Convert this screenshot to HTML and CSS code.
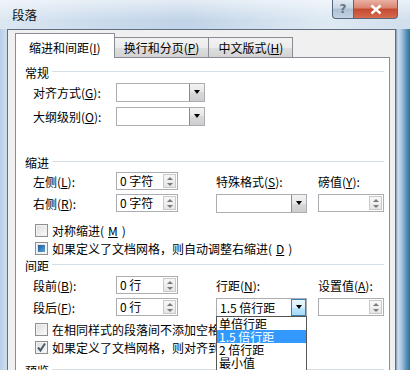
FILE: index.html
```html
<!DOCTYPE html>
<html>
<head>
  <meta charset="utf-8">
  <title>段落</title>
  <link rel="stylesheet" href="styles.css">
</head>
<body>
  <div class="window">
    <div class="titlebar">
      <span class="title">段落</span>
      <div class="caption-buttons">
        <span class="cap-btn help">?</span>
        <span class="cap-btn close">
          <svg width="14" height="11" viewBox="0 0 14 11"><path d="M2.5 1.5 L11.5 9.5 M11.5 1.5 L2.5 9.5"/></svg>
        </span>
      </div>
    </div>
    <div class="frame">
      <div class="client">
        <div class="tabs">
          <div class="tab active">缩进和间距(<u>I</u>)</div>
          <div class="tab">换行和分页(<u>P</u>)</div>
          <div class="tab">中文版式(<u>H</u>)</div>
        </div>
        <div class="panel">
          <div class="group-title">常规</div>
          <div class="form-grid general">
            <label>对齐方式(<u>G</u>):</label>
            <div class="combo wide"><span class="combo-text"></span><span class="drop-btn"></span></div>
            <label>大纲级别(<u>O</u>):</label>
            <div class="combo wide"><span class="combo-text"></span><span class="drop-btn"></span></div>
          </div>

          <div class="group-title spaced">缩进</div>
          <div class="form-grid measures">
            <label>左侧(<u>L</u>):</label>
            <div class="spin"><span class="spin-text">0 字符</span><span class="spin-btns"><span class="up"></span><span class="down"></span></span></div>
            <label>特殊格式(<u>S</u>):</label>
            <label>磅值(<u>Y</u>):</label>
            <label>右侧(<u>R</u>):</label>
            <div class="spin"><span class="spin-text">0 字符</span><span class="spin-btns"><span class="up"></span><span class="down"></span></span></div>
            <div class="combo"><span class="combo-text"></span><span class="drop-btn"></span></div>
            <div class="spin value"><span class="spin-text"></span><span class="spin-btns"><span class="up"></span><span class="down"></span></span></div>
          </div>
          <div class="check-list">
            <div class="check"><span class="box"></span>对称缩进(<u>M</u>)</div>
            <div class="check"><span class="box mixed"></span>如果定义了文档网格，则自动调整右缩进(<u>D</u>)</div>
          </div>

          <div class="group-title">间距</div>
          <div class="form-grid measures tight">
            <label>段前(<u>B</u>):</label>
            <div class="spin"><span class="spin-text">0 行</span><span class="spin-btns"><span class="up"></span><span class="down"></span></span></div>
            <label>行距(<u>N</u>):</label>
            <label>设置值(<u>A</u>):</label>
            <label>段后(<u>F</u>):</label>
            <div class="spin"><span class="spin-text">0 行</span><span class="spin-btns"><span class="up"></span><span class="down"></span></span></div>
            <div class="combo open">
              <span class="combo-text">1.5 倍行距</span><span class="drop-btn hot"></span>
              <ul class="drop-list">
                <li>单倍行距</li>
                <li class="selected">1.5 倍行距</li>
                <li>2 倍行距</li>
                <li>最小值</li>
                <li>固定值</li>
                <li>多倍行距</li>
              </ul>
            </div>
            <div class="spin value"><span class="spin-text"></span><span class="spin-btns"><span class="up"></span><span class="down"></span></span></div>
          </div>
          <div class="check-list after">
            <div class="check"><span class="box"></span>在相同样式的段落间不添加空格(<u>C</u>)</div>
            <div class="check"><span class="box checked"><svg width="11" height="11" viewBox="0 0 11 11"><path d="M2 5.5 L4.5 8.5 L9 1.5"/></svg></span>如果定义了文档网格，则对齐到网格(<u>W</u>)</div>
          </div>

          <div class="group-title preview">预览</div>
        </div>
      </div>
    </div>
  </div>
</body>
</html>
```

FILE: styles.css
```css
* {
  box-sizing: border-box;
}

body {
  margin: 0;
  font-family: "Noto Sans CJK SC", "Noto Sans", sans-serif;
  font-size: 12px;
  color: #000;
}

u {
  text-decoration: underline;
  text-underline-offset: 1px;
}

.window {
  width: 410px;
  height: 370px;
  overflow: hidden;
  display: flex;
  flex-direction: column;
}

/* title bar */
.titlebar {
  height: 29px;
  flex: none;
  display: flex;
  align-items: flex-start;
  padding-left: 12px;
  background:
    linear-gradient(180deg, rgba(255, 255, 255, 0.6), rgba(255, 255, 255, 0.1) 70%),
    linear-gradient(90deg, #d9e5f1 0%, #c6d8eb 22%, #b9cee5 45%, #cadbec 62%, #dbe7f2 80%, #cbdbeb 100%);
}

.title {
  line-height: 30px;
  font-size: 12.5px;
  color: #111;
}

.caption-buttons {
  margin-left: auto;
  margin-right: 12px;
  display: flex;
}

.cap-btn {
  height: 19px;
  display: flex;
  align-items: center;
  justify-content: center;
  border: 1px solid #56687d;
  border-top: none;
}

.help {
  width: 22px;
  border-radius: 0 0 0 4px;
  background: linear-gradient(#e2eaf2, #c9d6e4 45%, #aebfd2 50%, #c3d4e6);
  color: #62758b;
  font-family: "DejaVu Sans", sans-serif;
  font-weight: bold;
  font-size: 12px;
}

.close {
  width: 44px;
  border-left: none;
  border-radius: 0 0 4px 0;
  background: linear-gradient(#eab0a2, #d98570 45%, #c4492f 50%, #d66c50);
}

.close path {
  stroke: #fff;
  stroke-width: 2.4;
  fill: none;
}

/* window frame and client */
.frame {
  flex: 1;
  display: flex;
  min-height: 0;
  padding: 0 14px 0 7px;
  background: linear-gradient(90deg, #b8cee6 0, #cddced 6px, #cddced calc(100% - 14px), #7d97b2 calc(100% - 14px), #cfe0f0 calc(100% - 12px), #a2c0de calc(100% - 8px), #5e93bd calc(100% - 4px), #2f6f8c 100%);
}

.client {
  flex: 1;
  display: flex;
  flex-direction: column;
  background: #f0f0f0;
  border: 1px solid #5f6e80;
  border-bottom: none;
  padding: 3px 5px 0 7px;
}

/* tabs */
.tabs {
  display: flex;
  align-items: flex-end;
  margin-bottom: -1px;
}

.tab {
  height: 21px;
  line-height: 19px;
  padding: 0 9px;
  margin-right: -1px;
  border: 1px solid #898c95;
  border-bottom: none;
  background: linear-gradient(#f3f3f3, #ebebeb 50%, #dedede 50%, #d2d2d2);
}

.tab.active {
  position: relative;
  z-index: 1;
  height: 25px;
  padding: 4px 13px 0;
  background: #fff;
}

.panel {
  flex: 1;
  background: #fff;
  border: 1px solid #898c95;
  padding: 6px 5px 0 9px;
}

/* group headings with etched line */
.group-title {
  display: flex;
  align-items: center;
  gap: 3px;
  height: 16px;
}

.group-title::after {
  content: "";
  flex: 1;
  border-top: 1px solid #d5dfe5;
  border-bottom: 1px solid #fff;
}

.group-title.spaced {
  margin-top: 26px;
}

.group-title.preview {
  margin-top: 6px;
}

/* form rows */
.form-grid {
  display: grid;
  align-items: center;
  padding-left: 8px;
}

.general {
  grid-template-columns: 83px 89px;
  grid-auto-rows: 24px;
}

.measures {
  grid-template-columns: 83px 100px 102px 66px;
  grid-auto-rows: 22px;
}

.measures.tight {
  margin-top: 1px;
}

.combo {
  position: relative;
  display: flex;
  width: 91px;
  height: 19px;
  border: 1px solid #abadb3;
  background: #fff;
}

.combo.wide {
  width: 89px;
}

.combo-text {
  flex: 1;
  padding-left: 3px;
  line-height: 17px;
}

.drop-btn {
  width: 15px;
  border-left: 1px solid #8c8c8c;
  background: linear-gradient(#f3f3f3, #e6e6e6 50%, #d9d9d9 50%, #cdcdcd);
  display: flex;
  align-items: center;
  justify-content: center;
}

.drop-btn::before {
  content: "";
  border-left: 3px solid transparent;
  border-right: 3px solid transparent;
  border-top: 4px solid #000;
}

.drop-btn.hot {
  border: 1px solid #3c7fb1;
  background: linear-gradient(#eaf6fd, #d9f0fc 50%, #bee6fd 50%, #a7d9f5);
}

.drop-list {
  position: absolute;
  left: -1px;
  top: 100%;
  width: 91px;
  margin: 0;
  padding: 0;
  list-style: none;
  background: #fff;
  border: 1px solid #555;
  z-index: 2;
}

.drop-list li {
  height: 13px;
  line-height: 13px;
  padding-left: 2px;
}

.drop-list li.selected {
  background: #3399ff;
  color: #fff;
}

.spin {
  display: flex;
  width: 62px;
  height: 18px;
  border: 1px solid #abadb3;
  background: #fff;
}

.spin.value {
  width: 66px;
}

.spin-text {
  flex: 1;
  padding-left: 3px;
  line-height: 16px;
}

.spin-btns {
  width: 13px;
  margin: 1px 1px 1px 0;
  display: flex;
  flex-direction: column;
  border: 1px solid #c9c9c9;
  background: linear-gradient(#f8f8f8, #e6e6e6);
}

.spin-btns span {
  flex: 1;
  display: flex;
  align-items: center;
  justify-content: center;
}

.spin-btns .up::before {
  content: "";
  border-left: 3px solid transparent;
  border-right: 3px solid transparent;
  border-bottom: 3px solid #7a7a7a;
}

.spin-btns .down::before {
  content: "";
  border-left: 3px solid transparent;
  border-right: 3px solid transparent;
  border-top: 3px solid #7a7a7a;
}

/* checkboxes */
.check-list {
  margin-top: 7px;
  padding-left: 10px;
}

.check-list.after {
  margin-top: 2px;
}

.check {
  display: flex;
  align-items: center;
  gap: 4px;
  height: 18px;
  white-space: nowrap;
}

.box {
  position: relative;
  width: 13px;
  height: 13px;
  flex: none;
  border: 1px solid #8e8f8f;
  background: linear-gradient(135deg, #dcdcdc, #fbfbfb);
  box-shadow: inset 0 0 0 1px #f2f2f2;
}

.box.mixed::after {
  content: "";
  position: absolute;
  left: 2px;
  top: 2px;
  width: 7px;
  height: 7px;
  background: linear-gradient(135deg, #1f5b98, #58a2dc);
}

.box.checked svg {
  display: block;
}

.box.checked path {
  stroke: #4a5a6a;
  stroke-width: 2;
  fill: none;
}
```
